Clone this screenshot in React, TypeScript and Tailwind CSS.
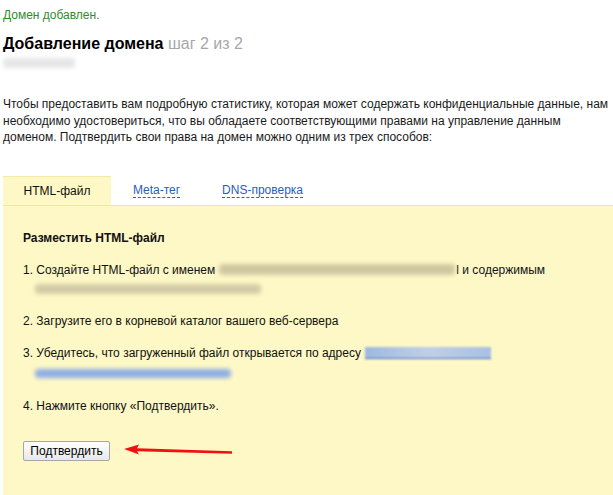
import React from "react";

// Шаг 2 добавления домена: выбор способа подтверждения прав.
const TABS = ["HTML-файл", "Meta-тег", "DNS-проверка"];

function Blur({ className }: { className: string }) {
  return <span className={`inline-block rounded-sm blur-[2px] ${className}`} />;
}

export default function App() {
  return (
    <main className="min-h-[495px] bg-white pl-[3px] text-[12px] text-[#1a1a1a] [font-family:'Liberation_Sans',Arial,sans-serif]">
      <p className="pt-[8px] leading-[15px] text-[#2f8a2f]">Домен добавлен.</p>

      <h1 className="mt-[11px] text-[16px] font-bold leading-[20px] text-black">
        Добавление домена <span className="font-normal text-[#a8a8a8]">шаг 2 из 2</span>
      </h1>

      <div className="mt-[3px] flex h-[12px] items-center">
        <Blur className="h-[10px] w-[72px] bg-[#e6e6e6]" />
      </div>

      <p className="mt-[27px] pr-[2px] leading-[16.5px]">
        Чтобы предоставить вам подробную статистику, которая может содержать конфиденциальные данные, нам
        необходимо удостовериться, что вы обладаете соответствующими правами на управление данным
        доменом. Подтвердить свои права на домен можно одним из трех способов:
      </p>

      {/* вкладки */}
      <div className="mt-[30px] flex h-[29px] items-stretch">
        {TABS.map((t, i) =>
          i === 0 ? (
            <div
              key={t}
              className="flex w-[108px] items-center justify-center border-t border-[#f3eaa6] bg-[#fdf8c6] text-[#111]"
            >
              {t}
            </div>
          ) : (
            <div key={t} className={`flex items-center ${i === 1 ? "ml-[22px]" : "ml-[42px]"}`}>
              <span className="border-b border-dashed border-[#2b5db5] leading-[14px] text-[#2b5db5]">{t}</span>
            </div>
          )
        )}
      </div>

      {/* панель содержимого */}
      <section className="min-h-[291px] border-t border-[#f1e7a4] bg-[#fdf8c6] pl-[20px] pt-[24px] text-[#111]">
        <h2 className="font-bold leading-[16px]">Разместить HTML-файл</h2>

        <ol className="mt-[16px] space-y-[16px] leading-[16px]">
          <li>
            <div className="flex items-center">
              <span>1. Создайте HTML-файл с именем</span>
              <Blur className="ml-[4px] h-[11px] w-[236px] bg-[#cfc7a0]" />
              <span className="ml-[1px]">l и содержимым</span>
            </div>
            <div className="mt-[3px] flex h-[16px] items-center pl-[12px]">
              <Blur className="h-[10px] w-[226px] bg-[#d3cba6]" />
            </div>
          </li>
          <li>2. Загрузите его в корневой каталог вашего веб-сервера</li>
          <li>
            <div className="flex items-center">
              <span>3. Убедитесь, что загруженный файл открывается по адресу</span>
              <span className="ml-[4px] inline-block h-[12px] w-[126px] border-b border-[#3a6cc4] bg-[linear-gradient(90deg,#9fb8e2,#c0cfe6,#a9bfe4)] blur-[1px]" />
            </div>
            <div className="mt-[5px] flex h-[16px] items-center pl-[12px]">
              <Blur className="h-[9px] w-[196px] bg-[#8eaee6]" />
            </div>
          </li>
          <li>4. Нажмите кнопку «Подтвердить».</li>
        </ol>

        <div className="mt-[27px] flex items-center">
          <button className="h-[20px] w-[87px] rounded-[2px] border border-[#a6a6a6] bg-[linear-gradient(#ffffff,#e8e8e8)] text-[12px] leading-[18px] text-black">
            Подтвердить
          </button>
          <svg width="112" height="14" viewBox="0 0 112 14" className="ml-[14px]">
            <path d="M0 5 L15 0.5 L13 4.2 L108 7.2 L108 9.8 L13 7.2 L15 10.5 Z" fill="#f01010" />
          </svg>
        </div>
      </section>
    </main>
  );
}
